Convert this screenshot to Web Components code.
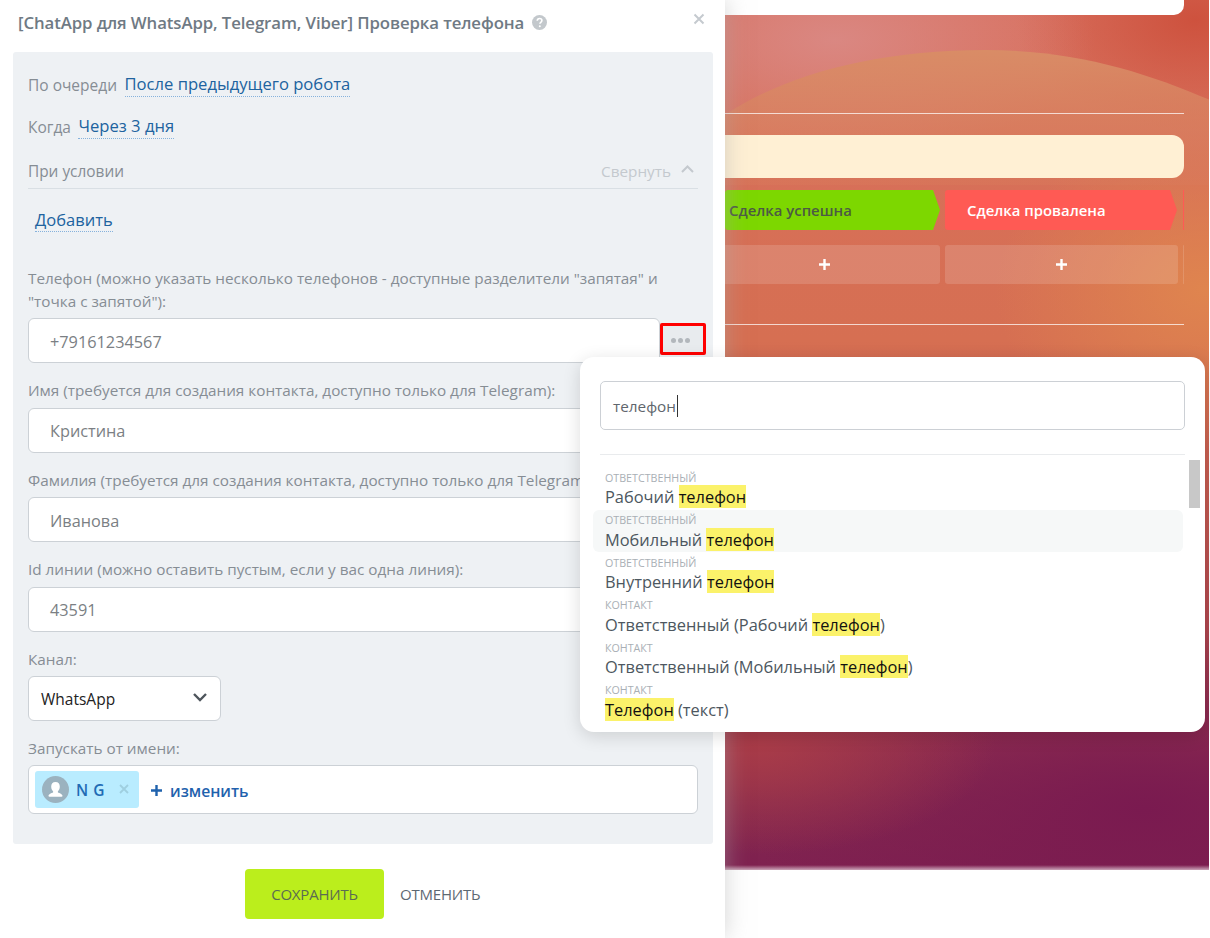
<!DOCTYPE html>
<html lang="ru">
<head>
<meta charset="utf-8">
<title>Проверка телефона</title>
<style>
  html, body { margin: 0; height: 100%; background: #fff; overflow: hidden; }
  body { font: 15px "Open Sans", "Noto Sans", sans-serif; color: #555; }
</style>
</head>
<body>
<crm-page>
  <robot-panel slot="panel" heading="[ChatApp для WhatsApp, Telegram, Viber] Проверка телефона">
    <inline-setting label="По очереди">После предыдущего робота</inline-setting>
    <inline-setting label="Когда" style="margin-top:18px">Через 3 дня</inline-setting>
    <condition-block></condition-block>
    <form-field style="margin-top:35px" label='Телефон (можно указать несколько телефонов - доступные разделители "запятая" и "точка с запятой"):'>
      <text-box value="+79161234567" with-dots></text-box>
    </form-field>
    <form-field label="Имя (требуется для создания контакта, доступно только для Telegram):"><text-box value="Кристина"></text-box></form-field>
    <form-field label="Фамилия (требуется для создания контакта, доступно только для Telegram):"><text-box value="Иванова"></text-box></form-field>
    <form-field label="Id линии (можно оставить пустым, если у вас одна линия):"><text-box value="43591"></text-box></form-field>
    <form-field label="Канал:"><select-box>WhatsApp</select-box></form-field>
    <form-field label="Запускать от имени:"><user-picker name="N G"></user-picker></form-field>
  </robot-panel>
  <board-view slot="board"></board-view>
  <var-popup slot="popup" query="телефон">
    <var-row group="Ответственный" before="Рабочий " match="телефон"></var-row>
    <var-row group="Ответственный" before="Мобильный " match="телефон" hover></var-row>
    <var-row group="Ответственный" before="Внутренний " match="телефон"></var-row>
    <var-row group="Контакт" before="Ответственный (Рабочий " match="телефон" after=")"></var-row>
    <var-row group="Контакт" before="Ответственный (Мобильный " match="телефон" after=")"></var-row>
    <var-row group="Контакт" match="Телефон" after=" (текст)"></var-row>
  </var-popup>
</crm-page>

<script>
// small helper, every element just sets its shadow html once
class Base extends HTMLElement {
  constructor() {
    super();
    this.attachShadow({ mode: "open" });
  }
  connectedCallback() {
    this.shadowRoot.innerHTML = this.render();
  }
  attr(name) {
    return this.getAttribute(name) || "";
  }
}

class CrmPage extends Base {
  render() {
    return `
      <style>
        :host { display: grid; grid-template-columns: 725px 1fr; width: 1210px; height: 938px; position: relative; overflow: hidden; }
        .pop { position: absolute; left: 580px; top: 357px; z-index: 5; }
        .panel { position: relative; z-index: 2; }
      </style>
      <div class="panel"><slot name="panel"></slot></div>
      <slot name="board"></slot>
      <div class="pop"><slot name="popup"></slot></div>`;
  }
}

class RobotPanel extends Base {
  render() {
    return `
      <style>
        :host { display: flex; flex-direction: column; height: 938px; background: #fff; box-shadow: 0 0 22px rgba(170,170,170,.5); }
        .head { height: 52px; padding: 0 21px 0 18px; display: flex; align-items: center; box-sizing: border-box; padding-bottom: 8px; }
        h2 { margin: 0; font-size: 16.8px; font-weight: 600; color: #6f7a84; white-space: nowrap; letter-spacing: -.1px; }
        .q { margin-left: 8px; }
        .x { margin-left: auto; margin-top: -6px; margin-right: -1px; }
        .body { margin: 0 12px 0 13px; height: 792px; box-sizing: border-box; background: #eef1f4; border-radius: 3px; padding: 21px 15px 0; }
        .foot { display: flex; align-items: center; padding: 25px 0 0 245px; }
        .save { width: 139px; height: 50px; background: #bbee1c; border-radius: 4px; display: flex; align-items: center; justify-content: center; color: #5c6b52; font-size: 15px; letter-spacing: -.2px; }
        .cancel { margin-left: 16px; color: #5d6872; font-size: 15px; letter-spacing: -.2px; }
      </style>
      <div class="head">
        <h2>${this.attr("heading")}</h2>
        <svg class="q" width="15" height="15" viewBox="0 0 15 15"><circle cx="7.5" cy="7.5" r="7.5" fill="#c3c8cc"/><path d="M5.2 5.8c.1-1.5 1.1-2.3 2.4-2.3s2.3.8 2.3 2c0 1.8-2 1.7-2 3.3" fill="none" stroke="#fff" stroke-width="1.6"/><circle cx="7.8" cy="11.3" r="1" fill="#fff"/></svg>
        <svg class="x" width="12" height="12" viewBox="0 0 12 12"><path d="M1.5 1.5l9 9M10.500 1.500l-9 9" stroke="#c5cacf" stroke-width="2"/></svg>
      </div>
      <div class="body"><slot></slot></div>
      <div class="foot"><div class="save">СОХРАНИТЬ</div><div class="cancel">ОТМЕНИТЬ</div></div>`;
  }
}

class InlineSetting extends Base {
  render() {
    return `
      <style>
        :host { display: flex; align-items: flex-end; height: 24px; gap: 7.5px; }
        .l { color: #868d94; font-size: 15.5px; line-height: 24px; }
        .v { color: #20639f; font-size: 16.6px; line-height: 22px; padding-bottom: 1px; border-bottom: 1px dotted #86b2dc; white-space: nowrap; }
      </style>
      <span class="l">${this.attr("label")}</span><span class="v"><slot></slot></span>`;
  }
}

class ConditionBlock extends Base {
  render() {
    return `
      <style>
        :host { display: block; margin-top: 21px; }
        .top { display: flex; align-items: center; height: 22px; padding-bottom: 6px; border-bottom: 1px solid #d9dfe4; color: #868d94; font-size: 15.4px; }
        .fold { margin-left: auto; color: #c4c9ce; display: flex; align-items: center; gap: 10px; padding-right: 4px; font-size: 15.3px; }
        .add { display: inline-block; margin: 19px 0 0 7px; color: #20639f; font-size: 16.5px; line-height: 23px; border-bottom: 1px dotted #86b2dc; }
      </style>
      <div class="top"><span>При условии</span><span class="fold">Свернуть
        <svg width="13" height="8" viewBox="0 0 13 8" style="margin-top:-5px"><path d="M1 7l5.500-5.500L12 7" fill="none" stroke="#c4c9ce" stroke-width="2"/></svg></span></div>
      <span class="add">Добавить</span>`;
  }
}

class FormField extends Base {
  render() {
    return `
      <style>
        :host { display: block; margin-top: 16px; }
        label { display: block; color: #868d94; font-size: 15.3px; line-height: 23px; margin-bottom: 5.4px; }
      </style>
      <label>${this.attr("label")}</label><slot></slot>`;
  }
}

class TextBox extends Base {
  render() {
    const dots = this.hasAttribute("with-dots");
    return `
      <style>
        :host { display: flex; height: 45px; margin-top: ${dots ? "2px" : "0"}; ${dots ? "margin-right: -8px;" : ""} position: relative; }
        .i { flex: 1; box-sizing: border-box; background: #fff; border: 1px solid #ccd1d6; border-radius: 6px; display: flex; align-items: center; padding: 2px 0 0 21px; color: #7b7f84; font-size: 16.3px; }
        .d { width: 34px; height: 24px; margin: 5px 0 0 0; padding: 2px 6px 0 0; border: 3px solid #f00; border-radius: 2px; background: #e8ebee; display: flex; align-items: center; justify-content: center; gap: 2px; }
        .d i { width: 5px; height: 5px; border-radius: 50%; background: #b2b7bc; }
      </style>
      <div class="i">${this.attr("value")}</div>
      ${dots ? `<div class="d"><i></i><i></i><i></i></div>` : ""}`;
  }
}

class SelectBox extends Base {
  render() {
    return `
      <style>
        :host { display: flex; align-items: center; justify-content: space-between; width: 193px; height: 45px; box-sizing: border-box; background: #fff; border: 1px solid #ccd1d6; border-radius: 6px; padding: 0 12px; color: #222; font-size: 15.5px; }
        span { padding-top: 1px; }
      </style>
      <span><slot></slot></span>
      <svg width="16" height="10" viewBox="0 0 16 10" style="margin-top:-3px"><path d="M2 2l6 6 6-6" fill="none" stroke="#4e555c" stroke-width="2.400"/></svg>`;
  }
}

class UserPicker extends Base {
  render() {
    return `
      <style>
        :host { display: flex; align-items: center; height: 49px; box-sizing: border-box; background: #fff; border: 1px solid #ccd1d6; border-radius: 6px; padding-left: 6px; }
        .chip { display: flex; align-items: center; width: 104px; height: 37px; background: #b9ecff; border-radius: 3px; box-sizing: border-box; padding-left: 7px; color: #1f6bb5; font-weight: 600; font-size: 15.5px; letter-spacing: .6px; }
        .n { margin-left: 7px; }
        .c { margin-left: 14px; margin-top: -1px; }
        .add { margin-left: 12px; padding-top: 2px; color: #1f62ad; font-weight: 600; font-size: 15.7px; display: flex; align-items: center; gap: 8px; }
      </style>
      <div class="chip">
        <svg width="27" height="27" viewBox="0 0 27 27"><circle cx="13.500" cy="13.500" r="13.500" fill="#9bb2bf"/><path d="M13.500 6c2.900 0 4.300 2.100 4.300 4.700 0 2-1 3.500-1.900 4.500v1.300c1.500.7 4.600 1.400 4.600 3.500 0 .5-.4.800-1 .800H7.500c-.6 0-1-.3-1-.8 0-2.100 3.100-2.800 4.600-3.500v-1.300c-.9-1-1.900-2.500-1.900-4.500C9.200 8.100 10.600 6 13.500 6z" fill="#fff"/></svg>
        <span class="n">${this.attr("name")}</span>
        <svg class="c" width="10" height="10" viewBox="0 0 10 10"><path d="M1 1l8 8M9 1l-8 8" stroke="#9fcfe0" stroke-width="1.800"/></svg>
      </div>
      <div class="add"><svg width="11" height="11" viewBox="0 0 11 11"><path d="M5.500 0v11M0 5.500h11" stroke="#1f62ad" stroke-width="2.400"/></svg><span>изменить</span></div>`;
  }
}

class BoardView extends Base {
  render() {
    return `
      <style>
        :host { display: block; height: 938px; background: #fff; position: relative; }
        .sky { height: 870px; margin-right: 1px; box-sizing: border-box; padding-right: 25px; position: relative; overflow: hidden;
          background:
            radial-gradient(ellipse 260px 120px at 110px 40px, rgba(218,138,134,.9), rgba(218,138,134,0)),
            radial-gradient(ellipse 180px 110px at 470px 20px, rgba(205,80,60,.95), rgba(205,80,60,0)),
            radial-gradient(ellipse 210px 160px at 480px 290px, rgba(224,135,78,.9), rgba(224,135,78,0)),
            radial-gradient(ellipse 240px 110px at 30px 745px, rgba(170,60,72,.95), rgba(170,60,72,0)),
            radial-gradient(ellipse 400px 180px at 420px 810px, rgba(122,26,80,1), rgba(122,26,80,0)),
            linear-gradient(180deg, #d8705f 0, #d66f52 340px, #b0474e 620px, #84294f 800px, #7f2150 870px);
        }
        .sky::after { content: ""; position: absolute; left: 0; right: 0; bottom: 0; height: 5px; background: linear-gradient(rgba(255,255,255,0), rgba(255,255,255,.6)); }
        .hill { position: absolute; left: 0; top: 45px; width: 485px; height: 140px; }
        .card { height: 15px; background: #fff; border-radius: 0 0 10px 0; position: relative; }
        .rule { height: 1px; background: rgba(255,255,255,.72); position: relative; }
        .note { height: 43px; background: #fff0d4; border-radius: 0 12px 12px 0; margin-top: 21px; position: relative; }
        .stages { display: flex; gap: 5px; margin-top: 12px; height: 40px; position: relative; }
        .st { position: relative; height: 40px; display: flex; align-items: center; font-weight: 600; font-size: 14.9px; white-space: nowrap; border-radius: 3px;
          clip-path: polygon(0 0, calc(100% - 7px) 0, 100% 50%, calc(100% - 7px) 100%, 0 100%); }
        .won { width: 215px; background: #7dd700; color: #4c5a44; padding-left: 4px; box-sizing: border-box; }
        .lost { width: 232px; background: #ff5a54; color: #fff; padding-left: 22px; box-sizing: border-box; }
        .more { width: 1px; margin-left: 1px; background: #ff5a54; }
        .tiles { display: flex; gap: 5px; margin-top: 15px; height: 39px; position: relative; }
        .tl { background: rgba(255,255,255,.14); border-radius: 3px; display: flex; align-items: center; justify-content: center; }
      </style>
      <div class="sky">
        <svg class="hill" viewBox="0 0 485 140" preserveAspectRatio="none">
          <defs><linearGradient id="h" x1="0" y1="0" x2="0" y2="1"><stop offset="0" stop-color="#d98c66"/><stop offset="1" stop-color="#d97c5c" stop-opacity=".35"/></linearGradient></defs>
          <path d="M0 70C60 30 150 5 260 5c90 0 160 22 225 50v85H0z" fill="url(#h)"/>
        </svg>
        <div class="card"></div>
        <div class="rule" style="margin-top:98px"></div>
        <div class="note"></div>
        <div class="stages">
          <div class="st won">Сделка успешна</div>
          <div class="st lost">Сделка провалена</div>
          <div class="more"></div>
        </div>
        <div class="tiles">
          <div class="tl" style="width:232px;margin-left:-17px">${this.plus()}</div>
          <div class="tl" style="width:233px">${this.plus()}</div>
          <div class="tl" style="width:1px"></div>
        </div>
        <div class="rule" style="margin-top:40px"></div>
      </div>`;
  }
  plus() {
    return `<svg width="11" height="11" viewBox="0 0 11 11"><path d="M5.500 0v11M0 5.500h11" stroke="#fff" stroke-width="2.400"/></svg>`;
  }
}

class VarPopup extends Base {
  render() {
    return `
      <style>
        :host { display: block; width: 625px; height: 375px; background: #fff; border-radius: 14px; box-shadow: 0 4px 18px rgba(0,0,0,.14); position: relative; overflow: hidden; box-sizing: border-box; padding: 24px 20px 0; }
        .s { height: 49px; box-sizing: border-box; border: 1px solid #ccd0d5; border-radius: 5px; display: flex; align-items: center; padding-left: 12px; color: #5f666d; font-size: 15.3px; }
        .s i { display: inline-block; width: 1px; height: 22px; background: #333; margin-left: 1px; }
        hr { border: 0; border-top: 1px solid #e9ebed; margin: 24px 0 0; }
        .list { margin: 12px 0 0 -7px; width: 590px; }
        .bar { position: absolute; left: 609px; top: 103px; width: 11px; height: 48px; background: #c8c8c8; }
      </style>
      <div class="s"><span>${this.attr("query")}</span><i></i></div>
      <hr>
      <div class="list"><slot></slot></div>
      <div class="bar"></div>`;
  }
}

class VarRow extends Base {
  render() {
    const after = this.attr("after");
    return `
      <style>
        :host { display: block; height: 42.5px; box-sizing: border-box; padding: 3.5px 0 0 12px; border-radius: 6px; ${this.hasAttribute("hover") ? "background: #f6f8f8;" : ""} }
        .g { color: #a9afb5; font-size: 10.7px; line-height: 15px; text-transform: uppercase; }
        .t { color: #4d5760; font-size: 16.4px; line-height: 24px; white-space: pre; margin-top: -.5px; }
        mark { background: #fbf26a; color: #111; }
      </style>
      <div class="g">${this.attr("group")}</div>
      <div class="t">${this.attr("before")}<mark>${this.attr("match")}</mark>${after}</div>`;
  }
}

customElements.define("crm-page", CrmPage);
customElements.define("robot-panel", RobotPanel);
customElements.define("inline-setting", InlineSetting);
customElements.define("condition-block", ConditionBlock);
customElements.define("form-field", FormField);
customElements.define("text-box", TextBox);
customElements.define("select-box", SelectBox);
customElements.define("user-picker", UserPicker);
customElements.define("board-view", BoardView);
customElements.define("var-popup", VarPopup);
customElements.define("var-row", VarRow);
</script>
</body>
</html>
